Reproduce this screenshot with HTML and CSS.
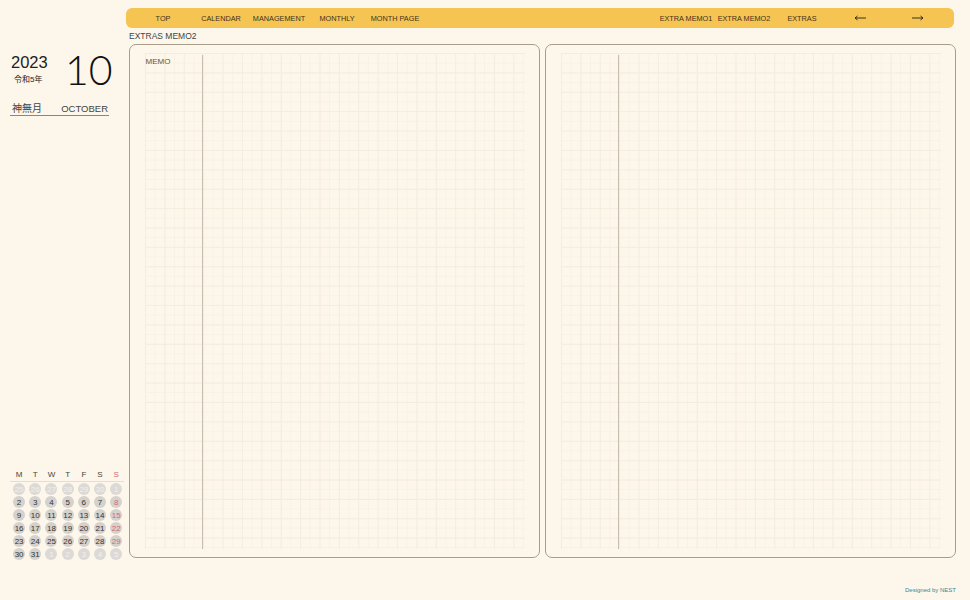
FILE: index.html
```html
<!DOCTYPE html>
<html lang="ja">

<head>
    <meta charset="UTF-8">
    <meta name="viewport" content="width=device-width, initial-scale=1.0">
    <title>EXTRAS MEMO2</title>
    <link rel="stylesheet" href="styles.css">
</head>

<body>
    <div class="app">
        <!-- Side: date + mini calendar -->
        <aside class="side">
            <div class="date-head">
                <div class="year-row">
                    <div class="year-box">
                        <div class="year">2023</div>
                        <div class="era">令和5年</div>
                    </div>
                    <div class="month-num">10</div>
                </div>
                <div class="month-names">
                    <span class="jp">神無月</span>
                    <span>OCTOBER</span>
                </div>
            </div>

            <div class="mini-cal">
                <div class="cal-head">
                    <span>M</span><span>T</span><span>W</span><span>T</span><span>F</span><span>S</span><span class="sun">S</span>
                </div>
                <div class="cal-days">
                    <span class="day off">25</span><span class="day off">26</span><span class="day off">27</span><span class="day off">28</span><span class="day off">29</span><span class="day off">30</span><span class="day off">1</span>
                    <span class="day">2</span><span class="day">3</span><span class="day">4</span><span class="day">5</span><span class="day">6</span><span class="day">7</span><span class="day sun">8</span>
                    <span class="day">9</span><span class="day">10</span><span class="day">11</span><span class="day">12</span><span class="day">13</span><span class="day">14</span><span class="day sun">15</span>
                    <span class="day">16</span><span class="day">17</span><span class="day">18</span><span class="day">19</span><span class="day">20</span><span class="day">21</span><span class="day sun">22</span>
                    <span class="day">23</span><span class="day">24</span><span class="day">25</span><span class="day">26</span><span class="day">27</span><span class="day">28</span><span class="day sun">29</span>
                    <span class="day">30</span><span class="day">31</span><span class="day off">1</span><span class="day off">2</span><span class="day off">3</span><span class="day off">4</span><span class="day off">5</span>
                </div>
            </div>
        </aside>

        <!-- Main -->
        <div class="main">
            <nav class="nav">
                <div class="nav-group">
                    <a class="nav-item">TOP</a>
                    <a class="nav-item">CALENDAR</a>
                    <a class="nav-item">MANAGEMENT</a>
                    <a class="nav-item">MONTHLY</a>
                    <a class="nav-item">MONTH PAGE</a>
                </div>
                <div class="nav-group">
                    <a class="nav-item">EXTRA MEMO1</a>
                    <a class="nav-item">EXTRA MEMO2</a>
                    <a class="nav-item">EXTRAS</a>
                    <a class="nav-item">
                        <svg class="arrow" viewBox="0 0 12 6" fill="none" stroke="currentColor" stroke-width="0.9">
                            <path d="M1 3h11M1 3l2.5-2M1 3l2.5 2"></path>
                        </svg>
                    </a>
                    <a class="nav-item">
                        <svg class="arrow" viewBox="0 0 12 6" fill="none" stroke="currentColor" stroke-width="0.9">
                            <path d="M0 3h11M11 3l-2.5-2M11 3l-2.5 2"></path>
                        </svg>
                    </a>
                </div>
            </nav>

            <div class="crumb">EXTRAS MEMO2</div>

            <div class="pages">
                <section class="page">
                    <div class="sheet">
                        <div class="memo-col"><span class="memo-label">MEMO</span></div>
                        <div class="note-col"></div>
                    </div>
                </section>
                <section class="page">
                    <div class="sheet">
                        <div class="memo-col"></div>
                        <div class="note-col"></div>
                    </div>
                </section>
            </div>

            <footer class="credit">Designed by NEST</footer>
        </div>
    </div>
</body>

</html>
```

FILE: styles.css
```css
* {
    box-sizing: border-box;
    -webkit-font-smoothing: antialiased;
}

body {
    margin: 0;
    font-family: "Liberation Sans", "Noto Sans CJK JP", sans-serif;
    background: #fdf6ea;
    color: #333;
    overflow: hidden;
}

.app {
    display: flex;
    height: 100vh;
}

/* Side column */
.side {
    width: 126px;
    flex-shrink: 0;
    display: flex;
    flex-direction: column;
    padding: 48px 0 39px 10px;
}

.year-row {
    display: flex;
}

.year-box {
    width: 55px;
    padding-top: 5px;
}

.year {
    font-size: 16.5px;
    line-height: 18px;
    color: #222;
    padding-left: 1px;
}

.era {
    font-size: 8px;
    line-height: 10px;
    margin-top: 4px;
    padding-left: 4px;
    color: #222;
}

.month-num {
    font-family: "Lato", "Liberation Sans", sans-serif;
    font-weight: 300;
    font-size: 41px;
    line-height: 40px;
    margin-top: 2px;
    color: #111;
}

.month-names {
    width: 99px;
    display: flex;
    justify-content: space-between;
    margin-top: 13px;
    padding: 0 1px 0 2px;
    font-size: 9.5px;
    line-height: 12px;
    color: #444;
    border-bottom: 1px solid #8a8580;
}

.month-names .jp {
    font-size: 10px;
}

/* Mini calendar */
.mini-cal {
    margin-top: auto;
    width: 114px;
}

.cal-head,
.cal-days {
    display: grid;
    grid-template-columns: repeat(7, 16.2px);
    padding-left: 1px;
}

.cal-head {
    font-size: 8px;
    line-height: 12px;
    text-align: center;
    color: #444;
    border-bottom: 1px solid #e2ddd6;
    margin-bottom: 1px;
}

.cal-head .sun {
    color: #d9667a;
}

.cal-days {
    grid-auto-rows: 13px;
}

.day {
    display: flex;
    align-items: center;
    justify-content: center;
    width: 12px;
    height: 12px;
    margin: 0 auto;
    border-radius: 50%;
    background: #d5d1cd;
    font-size: 8px;
    color: #333;
}

.day.sun {
    color: #d9667a;
}

.day.off {
    background: #dcd9d6;
    color: #f3f0ec;
}

/* Main column */
.main {
    width: 830px;
    padding-top: 8px;
    display: flex;
    flex-direction: column;
}

.nav {
    width: 828px;
    height: 20px;
    display: flex;
    justify-content: space-between;
    align-items: center;
    padding: 0 7px 0 8px;
    background: #f6c453;
    border-radius: 6px;
}

.nav-group {
    display: flex;
}

.nav-item {
    width: 58px;
    text-align: center;
    font-size: 7.3px;
    color: #3d3320;
    display: flex;
    justify-content: center;
    align-items: center;
}

.arrow {
    width: 12px;
    height: 6px;
    color: #222;
}

.crumb {
    margin: 2px 0 2px 3px;
    font-size: 8.5px;
    line-height: 12px;
    color: #444;
}

.pages {
    display: flex;
    gap: 5px;
    margin-left: 3px;
    width: 827px;
    height: 514px;
}

.page {
    flex: 1;
    border: 1.6px solid #a99d8a;
    border-radius: 7px;
    padding: 8px 14px 8px 14.5px;
}

/* Grid paper */
.sheet {
    height: 100%;
    display: flex;
    background-color: #fdf6ea;
    background-image:
        linear-gradient(to right, #f6ecde 1px, transparent 1px),
        linear-gradient(to bottom, #f6ecde 1px, transparent 1px),
        linear-gradient(to right, #faf1e5 1px, transparent 1px),
        linear-gradient(to bottom, #faf1e5 1px, transparent 1px);
    background-size: 19.4px 19.4px, 19.4px 19.4px, 9.7px 9.7px, 9.7px 9.7px;
}

.memo-col {
    width: 57px;
    padding-top: 4px;
}

.memo-label {
    display: block;
    font-size: 8px;
    line-height: 10px;
    color: #555;
    padding-left: 1px;
}

.note-col {
    flex: 1;
    border-left: 1px solid #c8beb0;
    margin-top: 2px;
}

.credit {
    margin-top: 29px;
    text-align: right;
    font-size: 6px;
    color: #3a8795;
}
```
